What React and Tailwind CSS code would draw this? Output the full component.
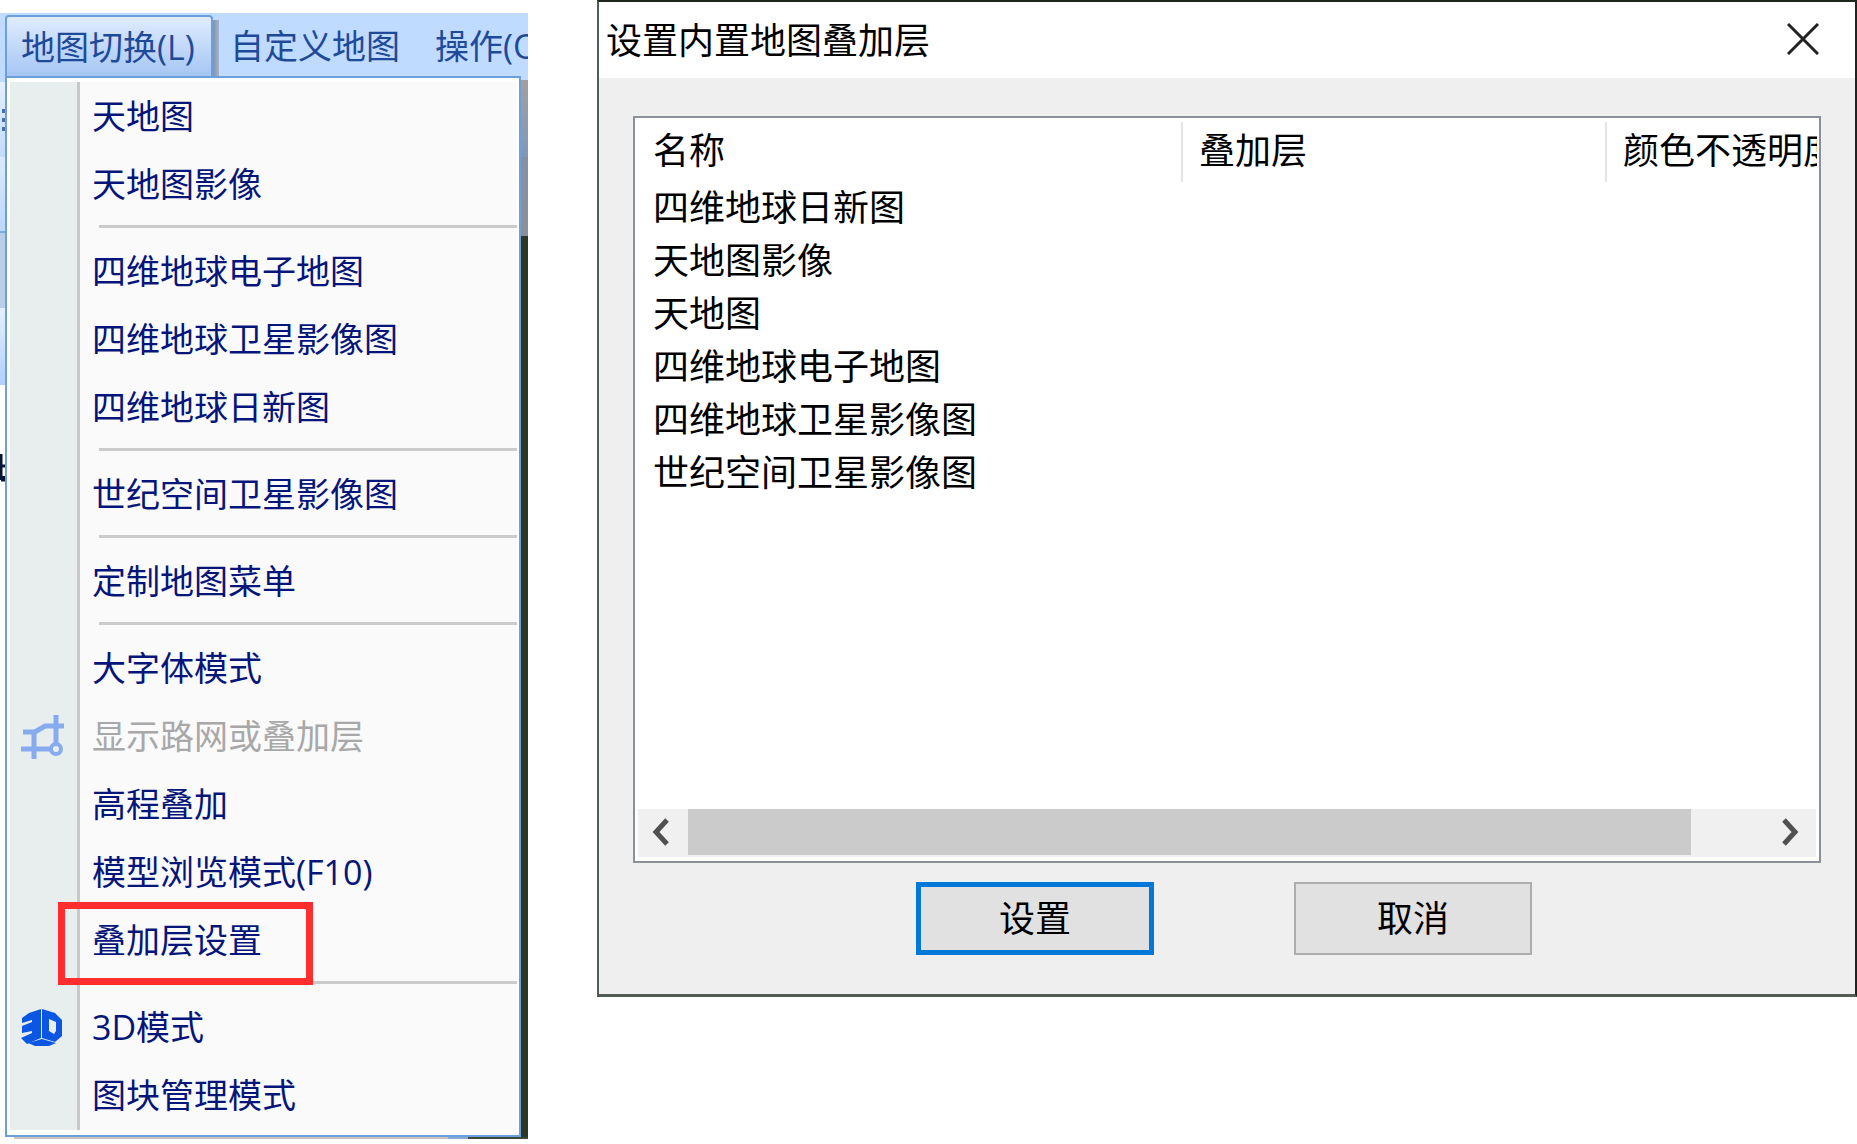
const MENU = [
  ["天地图", "天地图影像"],
  ["四维地球电子地图", "四维地球卫星影像图", "四维地球日新图"],
  ["世纪空间卫星影像图"],
  ["定制地图菜单"],
  ["大字体模式", "显示路网或叠加层", "高程叠加", "模型浏览模式(F10)", "叠加层设置"],
  ["3D模式", "图块管理模式"],
];

const LAYERS = [
  "四维地球日新图",
  "天地图影像",
  "天地图",
  "四维地球电子地图",
  "四维地球卫星影像图",
  "世纪空间卫星影像图",
];

function RoadIcon() {
  return (
    <svg width="44" height="46" viewBox="0 0 44 46" fill="none" stroke="#86abef" strokeWidth="5">
      <path d="M3 18H15L25 12H44" />
      <path d="M1 35H31" />
      <path d="M14 18V45" />
      <path d="M36 1V29" />
      <circle cx="36" cy="35" r="5" strokeWidth="4" />
    </svg>
  );
}

function ThreeDIcon() {
  return (
    <svg width="44" height="40" viewBox="0 0 44 40" fill="#0b57e3">
      <path d="M21 1V30L7 36L1 30L12 25V23L2 25V18L12 14V12L2 15V10L9 5Z" />
      <path fillRule="evenodd" d="M22 1L35 5L42 12V28L35 34L22 30ZM29 11V23L34 26L36 23V14Z" />
      <path d="M8 35L22 31L36 35L29 38H15Z" />
    </svg>
  );
}

function MenuItem({ label }) {
  const disabled = label === "显示路网或叠加层";
  return (
    <li className="relative flex h-[68px] items-center">
      <span className="flex w-[82px] shrink-0 items-center pl-[10px]">
        {disabled && <RoadIcon />}
        {label === "3D模式" && <ThreeDIcon />}
      </span>
      <button
        type="button"
        disabled={disabled}
        className={disabled ? "pb-[2px] whitespace-nowrap text-[#a8a8a8]" : "pb-[2px] whitespace-nowrap text-[#06157a]"}
      >
        {label}
      </button>
      {label === "叠加层设置" && (
        <span className="pointer-events-none absolute -top-[5px] left-[48px] z-10 h-[83px] w-[255px] border-[7px] border-[#ff2d2d]" />
      )}
    </li>
  );
}

function MapMenu() {
  return (
    <section className="flex w-[528px] shrink-0 flex-col pt-[13px] text-[34px] leading-[40px] font-['Open_Sans','Noto_Sans_CJK_SC',sans-serif]">
      <nav className="flex h-[63px] overflow-hidden bg-[#bfdbff] pl-[5px] text-[#1f4a99]">
        <button
          type="button"
          className="mt-[2px] w-[208px] shrink-0 rounded-t-sm border-2 border-b-0 border-[#6f9fdb] bg-linear-to-b from-[#dfecfe] to-[#a5c6f3] pl-[14px] text-left whitespace-nowrap"
        >
          地图切换(L)
        </button>
        <span className="mt-[7px] w-[6px] shrink-0 bg-linear-to-r from-[#7f93ab] to-[#a3b5cc]" />
        <button type="button" className="ml-[11px] shrink-0 pt-[2px] whitespace-nowrap">自定义地图</button>
        <button type="button" className="ml-[35px] shrink-0 pt-[2px] whitespace-nowrap">操作(O)</button>
      </nav>
      <div className="flex">
        <div className="flex w-[5px] shrink-0 flex-col">
          <span className="h-[6px] bg-[#bfdbff]" />
          <span className="flex h-[75px] flex-col items-end gap-[5px] bg-linear-to-b from-[#e6f0fe] to-[#c2dafa] pt-[27px]">
            <i className="h-[4px] w-[3px] bg-[#4a6fb0]" />
            <i className="h-[4px] w-[3px] bg-[#4a6fb0]" />
            <i className="h-[4px] w-[3px] bg-[#4a6fb0]" />
          </span>
          <span className="h-[76px] border-b-2 border-[#7ea8e0] bg-linear-to-b from-[#dbe9fd] to-[#bdd7fb]" />
          <span className="h-[75px] bg-[#b9cfe9]" />
          <span className="h-[77px] bg-linear-to-b from-[#e6f0fe] to-[#b0cffa]" />
          <svg className="mt-[67px]" width="5" height="32" viewBox="0 0 5 32" fill="none" stroke="#0a1438" strokeWidth="3">
            <path d="M1 2V28M1 14H5M1 28H4V24" />
          </svg>
        </div>
        <div className="min-w-0 flex-1 border-2 border-[#6f9fdb] bg-white pt-[4px] pr-[2px] pb-[5px] pl-[3px]">
          <div className="bg-[linear-gradient(to_right,#e8eeee_67px,#c8c8c8_67px,#c8c8c8_70px,#fafafa_70px)] pt-px">
            {MENU.map((group, i) => (
              <div key={group[0]}>
                {i > 0 && (
                  <div className="h-[19px] pt-[6px] pl-[89px]">
                    <hr className="border-t-[3px] border-[#cbcbcb]" />
                  </div>
                )}
                <ul>
                  {group.map((label) => (
                    <MenuItem key={label} label={label} />
                  ))}
                </ul>
              </div>
            ))}
          </div>
        </div>
        <div className="flex w-[7px] shrink-0 flex-col">
          <span className="h-[4px] bg-[#bfdbff]" />
          <span className="h-[77px] bg-linear-to-b from-[#a0a0a0] to-[#7f97bb]" />
          <span className="h-[79px] bg-linear-to-b from-[#8491a8] to-[#8a909a]" />
          <span className="flex-1 bg-[#2b3828]" />
        </div>
      </div>
      <div className="flex h-[2px]">
        <span className="w-[14px]" />
        <span className="flex-1 bg-[#c9c5bd]" />
        <span className="w-[20px] bg-[#8aa9d6]" />
        <span className="w-[60px] bg-[#3c4a3c]" />
      </div>
    </section>
  );
}

function Chevron({ d }) {
  return (
    <svg width="20" height="28" viewBox="0 0 20 28" fill="none" stroke="#505050" strokeWidth="5">
      <path d={d} />
    </svg>
  );
}

function LayerDialog() {
  return (
    <section
      role="dialog"
      aria-labelledby="dialog-title"
      className="min-w-0 flex-1 self-start border-t-2 border-r-2 border-b-[3px] border-l-2 border-t-[#1f261e] border-r-[#1c241c] border-b-[#525c54] border-l-[#525c54] bg-[#efefef] text-[36px] leading-[40px] text-black font-['Liberation_Sans','Noto_Sans_CJK_SC',sans-serif]"
    >
      <header className="flex h-[76px] items-center justify-between bg-white pr-[36px] pl-[7px]">
        <h1 id="dialog-title" className="pt-[4px]">设置内置地图叠加层</h1>
        <button type="button" aria-label="关闭" className="pb-[2px]">
          <svg width="32" height="32" viewBox="0 0 32 32" fill="none" stroke="#222" strokeWidth="3">
            <path d="M1 1L31 31M31 1L1 31" />
          </svg>
        </button>
      </header>
      <div className="px-[34px] pt-[38px] pb-[39px]">
        <div className="flex h-[747px] flex-col border-2 border-[#8b919c] bg-white pb-[4px]">
          <div className="flex-1 overflow-hidden pt-[4px] pr-[2px]">
            <table className="w-full table-fixed border-collapse text-left">
              <thead>
                <tr className="h-[60px]">
                  <th className="w-[547px] border-r-2 border-[#e4e4e4] pl-[18px] font-normal">名称</th>
                  <th className="w-[424px] border-r-2 border-[#e4e4e4] pl-[16px] font-normal">叠加层</th>
                  <th className="overflow-hidden pl-[16px] font-normal whitespace-nowrap">颜色不透明度</th>
                </tr>
              </thead>
              <tbody>
                {LAYERS.map((name) => (
                  <tr key={name} className="h-[53px]">
                    <td className="pl-[18px] whitespace-nowrap">{name}</td>
                    <td />
                    <td />
                  </tr>
                ))}
              </tbody>
            </table>
          </div>
          <div className="mx-[3px] flex h-[48px] bg-[#f0f0f0]">
            <button type="button" aria-label="向左滚动" className="flex w-[50px] shrink-0 items-center justify-center pr-[6px] pb-[2px]">
              <Chevron d="M17 2L6 14L17 26" />
            </button>
            <div className="min-w-0 flex-1">
              <div className="h-[46px] w-[93%] bg-[#cbcbcb]" />
            </div>
            <button type="button" aria-label="向右滚动" className="flex w-[50px] shrink-0 items-center justify-center pb-[2px]">
              <Chevron d="M3 2L14 14L3 26" />
            </button>
          </div>
        </div>
        <div className="flex justify-center gap-[140px] pt-[19px] pr-[6px]">
          <button type="button" className="h-[73px] w-[238px] border-[5px] border-[#0078d7] bg-[#e1e1e1] pt-[2px]">设置</button>
          <button type="button" className="h-[73px] w-[238px] border-2 border-[#adadad] bg-[#e1e1e1] pt-[2px]">取消</button>
        </div>
      </div>
    </section>
  );
}

export default function App() {
  return (
    <main className="flex min-h-screen items-start gap-[69px] bg-white">
      <MapMenu />
      <LayerDialog />
    </main>
  );
}
